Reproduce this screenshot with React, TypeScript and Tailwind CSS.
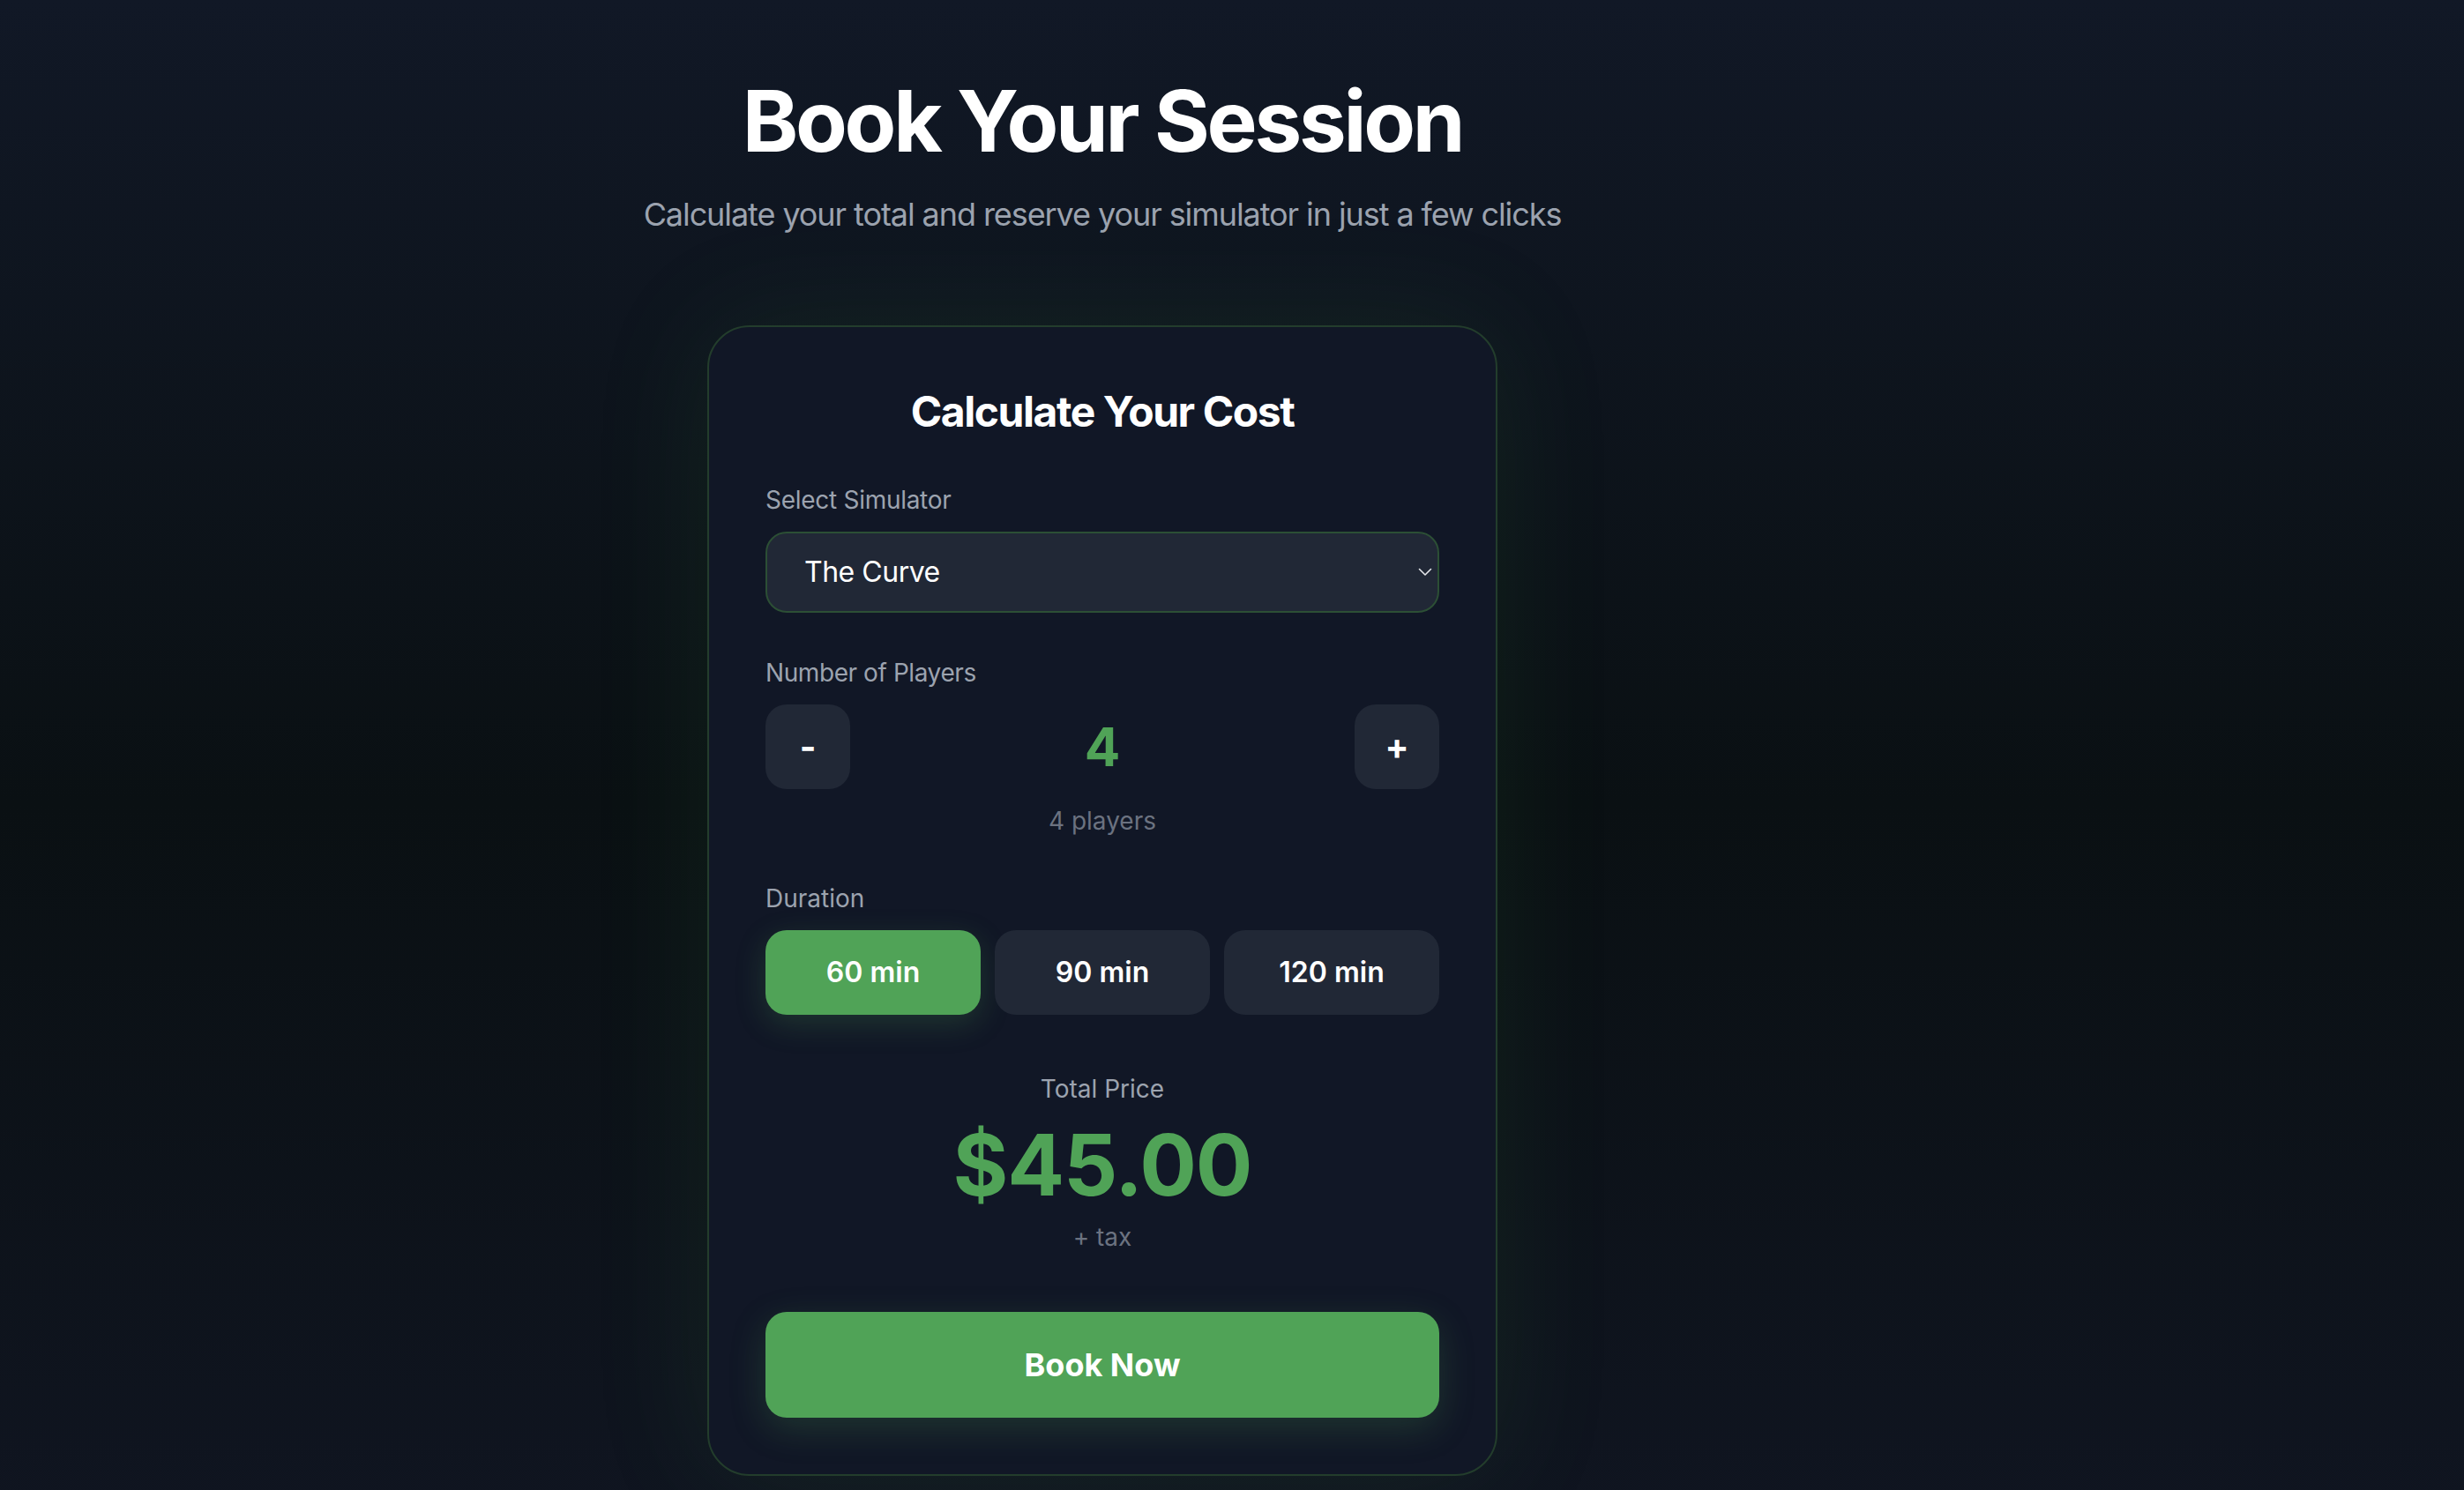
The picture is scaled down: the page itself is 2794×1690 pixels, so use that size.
import { useState } from 'react';

const simulators = [
  { id: 'curve', name: 'The Curve', rate: 45 },
  { id: 'track', name: 'The Track', rate: 55 },
  { id: 'pro', name: 'Pro Cockpit', rate: 65 },
];

const durations = [60, 90, 120];

export default function App() {
  const [simId, setSimId] = useState('curve');
  const [players, setPlayers] = useState(4);
  const [duration, setDuration] = useState(60);

  const sim = simulators.find((s) => s.id === simId) ?? simulators[0];
  const total = (sim.rate * duration) / 60;

  return (
    <div className="min-h-screen w-full bg-[linear-gradient(180deg,#111826_0%,#0a1013_52%,#101521_100%)] font-[family-name:Inter,'Noto_Sans',sans-serif] text-white">
      <main className="flex flex-col items-center pr-[294px] pt-[89px] pb-[80px]">
        <h1 className="text-[96px] leading-[96px] font-bold tracking-[-0.034em]">Book Your Session</h1>
        <p className="mt-[30px] text-[36px] leading-[56px] tracking-[-0.03em] text-[#9ca3af]">
          Calculate your total and reserve your simulator in just a few clicks
        </p>

        <section className="mt-[98px] w-[896px] rounded-[48px] border-2 border-[#233d2c] bg-[#111726] p-[64px] shadow-[0_0_140px_rgba(76,175,80,0.10)]">
          <h2 className="text-center text-[48px] leading-[64px] font-bold tracking-[-0.03em]">Calculate Your Cost</h2>

          <div className="mt-[48px]">
            <label className="block text-[28px] leading-[40px] tracking-[-0.01em] text-[#9ca3af]">Select Simulator</label>
            <div className="relative mt-[16px]">
              <select
                value={simId}
                onChange={(e) => setSimId(e.target.value)}
                className="h-[92px] w-full appearance-none rounded-[24px] border-2 border-[#2c4f35] bg-[#212836] pl-[42px] text-[32px] tracking-[-0.015em] text-white outline-none"
              >
                {simulators.map((s) => (
                  <option key={s.id} value={s.id}>
                    {s.name}
                  </option>
                ))}
              </select>
              <svg
                className="pointer-events-none absolute right-[8px] top-1/2 -translate-y-1/2"
                width="16"
                height="10"
                viewBox="0 0 16 10"
                fill="none"
              >
                <path d="M1.5 1.5l6.5 6.5 6.5-6.5" stroke="#e5e7eb" strokeWidth="1.6" strokeLinecap="round" strokeLinejoin="round" />
              </svg>
            </div>
          </div>

          <div className="mt-[48px]">
            <label className="block text-[28px] leading-[40px] tracking-[-0.015em] text-[#9ca3af]">Number of Players</label>
            <div className="mt-[16px] flex items-center justify-between">
              <button
                onClick={() => setPlayers((p) => Math.max(1, p - 1))}
                className="flex h-[96px] w-[96px] items-center justify-center rounded-[24px] bg-[#212836] text-[40px] font-bold"
              >
                -
              </button>
              <span className="text-[60px] leading-[72px] font-bold text-[#50a357]">{players}</span>
              <button
                onClick={() => setPlayers((p) => Math.min(8, p + 1))}
                className="flex h-[96px] w-[96px] items-center justify-center rounded-[24px] bg-[#212836] text-[40px] font-bold"
              >
                +
              </button>
            </div>
            <p className="mt-[16px] text-center text-[28px] leading-[40px] text-[#6b7280]">{players} players</p>
          </div>

          <div className="mt-[48px]">
            <label className="block text-[28px] leading-[40px] text-[#9ca3af]">Duration</label>
            <div className="mt-[16px] grid grid-cols-3 gap-[16px]">
              {durations.map((d) => (
                <button
                  key={d}
                  onClick={() => setDuration(d)}
                  className={`h-[96px] rounded-[24px] text-[32px] font-semibold ${
                    duration === d
                      ? 'bg-[#50a357] shadow-[0_10px_34px_rgba(80,163,87,0.22)]'
                      : 'bg-[#212836]'
                  }`}
                >
                  {d} min
                </button>
              ))}
            </div>
          </div>

          <div className="mt-[64px] flex flex-col items-center">
            <p className="text-[28px] leading-[40px] text-[#9ca3af]">Total Price</p>
            <p className="mt-[18px] text-[96px] leading-[96px] font-bold tracking-[-0.012em] text-[#50a357]">${total.toFixed(2)}</p>
            <p className="mt-[14px] text-[28px] leading-[40px] text-[#6b7280]">+ tax</p>
          </div>

          <button className="mt-[65px] h-[120px] w-full rounded-[24px] bg-[#50a357] text-[36px] font-bold shadow-[0_12px_40px_rgba(80,163,87,0.22)]">
            Book Now
          </button>
        </section>
      </main>
    </div>
  );
}
